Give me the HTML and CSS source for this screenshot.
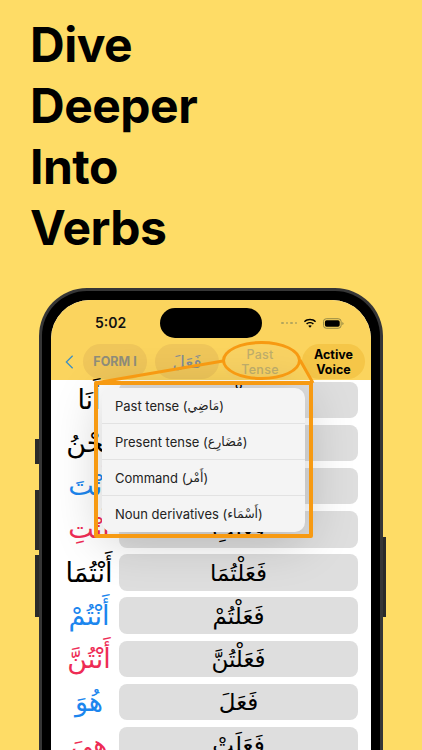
FILE: index.html
```html
<!DOCTYPE html>
<html lang="en">
<head>
<meta charset="utf-8">
<title>Dive Deeper Into Verbs</title>
<link rel="stylesheet" href="styles.css">
</head>
<body>
<main class="poster">
  <h1 class="headline">Dive<br>Deeper<br>Into<br>Verbs</h1>
  <div class="phone">
    <span class="hw hw-mute"></span>
    <span class="hw hw-up"></span>
    <span class="hw hw-down"></span>
    <span class="hw hw-power"></span>
    <div class="screen">
      <div class="island"></div>
      <header class="top">
        <div class="status">
          <span class="time">5:02</span>
          <span class="status-icons">
            <span class="dots"><i></i><i></i><i></i><i></i></span>
            <svg class="wifi" viewBox="0 0 16 12"><path d="M8 2.200c2.300 0 4.300.9 5.800 2.300l1.100-1.200C13.100 1.600 10.700.6 8 .6S2.900 1.600 1.100 3.300l1.100 1.200C3.700 3.100 5.700 2.200 8 2.200zM8 5.800c1.300 0 2.400.5 3.300 1.300l1.100-1.200C11.200 4.800 9.700 4.200 8 4.200s-3.200.6-4.400 1.700l1.100 1.200C5.600 6.300 6.700 5.800 8 5.800zM8 7.900c-.8 0-1.500.3-2 .8l2 2.200 2-2.200c-.5-.5-1.200-.8-2-.8z"/></svg>
            <svg class="battery" viewBox="0 0 22 11"><rect x=".5" y=".5" width="18.500" height="10" rx="3" fill="none" stroke="#8f8442"/><rect x="2" y="2" width="15.500" height="7" rx="1.800"/><path d="M20.300 3.800c.8.300 1.200.9 1.200 1.700s-.4 1.400-1.200 1.700z" fill="#8f8442"/></svg>
          </span>
        </div>
        <nav class="tabs">
          <svg class="back" viewBox="0 0 10 16"><path d="M8.500 1 1.500 8l7 7" fill="none" stroke="#3c8fc4" stroke-width="1.400"/></svg>
          <span class="pill pill-form">FORM I</span>
          <span class="pill pill-verb" lang="ar" dir="rtl">فَعَلَ</span>
          <span class="pill pill-past">Past<br>Tense</span>
          <span class="pill pill-voice">Active<br>Voice</span>
        </nav>
      </header>
      <section class="table">
        <div class="row"><span class="pron black" lang="ar" dir="rtl">أَنَا</span><span class="cell" lang="ar" dir="rtl">فَعَلْتُ</span></div>
        <div class="row"><span class="pron black" lang="ar" dir="rtl">نَحْنُ</span><span class="cell" lang="ar" dir="rtl">فَعَلْنَا</span></div>
        <div class="row"><span class="pron blue" lang="ar" dir="rtl">أَنْتَ</span><span class="cell" lang="ar" dir="rtl">فَعَلْتَ</span></div>
        <div class="row"><span class="pron red" lang="ar" dir="rtl">أَنْتِ</span><span class="cell" lang="ar" dir="rtl">فَعَلْتِ</span></div>
        <div class="row"><span class="pron black" lang="ar" dir="rtl">أَنْتُمَا</span><span class="cell" lang="ar" dir="rtl">فَعَلْتُمَا</span></div>
        <div class="row"><span class="pron blue" lang="ar" dir="rtl">أَنْتُمْ</span><span class="cell" lang="ar" dir="rtl">فَعَلْتُمْ</span></div>
        <div class="row"><span class="pron red" lang="ar" dir="rtl">أَنْتُنَّ</span><span class="cell" lang="ar" dir="rtl">فَعَلْتُنَّ</span></div>
        <div class="row"><span class="pron blue" lang="ar" dir="rtl">هُوَ</span><span class="cell" lang="ar" dir="rtl">فَعَلَ</span></div>
        <div class="row"><span class="pron red" lang="ar" dir="rtl">هِيَ</span><span class="cell" lang="ar" dir="rtl">فَعَلَتْ</span></div>
      </section>
      <ul class="menu">
        <li>Past tense (<span lang="ar">مَاضِي</span>)</li>
        <li>Present tense (<span lang="ar">مُضَارِع</span>)</li>
        <li>Command (<span lang="ar">أَمْر</span>)</li>
        <li>Noun derivatives (<span lang="ar">أَسْمَاء</span>)</li>
      </ul>
      <div class="callout-box"></div>
      <div class="callout-oval"></div>
      <svg class="callout-lines" viewBox="0 0 320 60"><path d="M44 43 172 21M249 20 262 43" fill="none" stroke="#f79a12" stroke-width="3"/></svg>
    </div>
  </div>
</main>
</body>
</html>
```
FILE: styles.css
```css
* { box-sizing: border-box; }
html, body { margin: 0; padding: 0; }
body { width: 422px; height: 750px; overflow: hidden; background: #fedc66; font-family: Inter, "Liberation Sans", sans-serif; }
.poster { width: 422px; height: 750px; overflow: hidden; padding: 14px 0 0 30px; }
.headline { margin: 0; font: 700 48px/61px Inter, "Liberation Sans", sans-serif; letter-spacing: -0.500px; color: #000; }
.phone { position: relative; width: 344px; height: 560px; margin: 30px 0 0 9px; background: #000; border: 3px solid #363636; border-bottom: 0; border-radius: 48px 48px 0 0; padding: 9px 9px 0; }
.hw { position: absolute; width: 4px; background: #2a2a2a; }
.hw-mute { left: -7px; top: 148px; height: 25px; }
.hw-up { left: -7px; top: 199px; height: 60px; }
.hw-down { left: -7px; top: 264px; height: 62px; }
.hw-power { right: -6px; width: 3px; top: 246px; height: 80px; }
.screen { position: relative; width: 320px; height: 560px; overflow: hidden; background: #fff; border-radius: 39px 39px 0 0; }
.island { position: absolute; top: 8px; left: 109px; width: 102px; height: 30px; background: #000; border-radius: 15px; }
.top { height: 80px; background: #fbd45e; padding: 0 5px 0 14px; }
.status { height: 33px; display: flex; align-items: flex-end; justify-content: space-between; padding: 0 22px 0 30px; }
.time { font: 600 14px/20px Inter, "Liberation Sans", sans-serif; color: #111; }
.status-icons { display: flex; align-items: center; gap: 6px; height: 20px; }
.dots { display: flex; gap: 2px; }
.dots i { width: 2.500px; height: 2.500px; border-radius: 50%; background: #b3a65c; }
.wifi { width: 14px; height: 11px; fill: #000; }
.battery { width: 21px; height: 11px; }
.tabs { display: flex; align-items: center; height: 35px; margin-top: 11px; }
.back { width: 9px; height: 16px; margin-right: 9px; flex: none; }
.pill { height: 35px; border-radius: 17.500px; background: #f5c648; display: flex; align-items: center; justify-content: center; text-align: center; font: 700 12.500px/15px Inter, "Liberation Sans", sans-serif; flex: none; }
.pill-form { width: 64px; margin-right: 8px; color: #8f8d7a; background: #efc65a; }
.pill-verb { width: 64px; margin-right: 3px; color: #7f8a96; background: #efc65a; font: 400 17px/20px "DejaVu Sans", sans-serif; }
.pill-past { width: 76px; margin-right: 4px; color: #bfae6b; background: #f8d263; font-weight: 500; letter-spacing: .3px; }
.pill-voice { width: 63px; color: #000; }
.table { display: flex; flex-direction: column; gap: 6.700px; padding: 1.500px 13px 0 0; }
.row { display: flex; align-items: center; height: 36.500px; }
.pron { width: 68px; flex: none; padding-left: 8px; text-align: center; font: 400 27px/36px "DejaVu Sans", sans-serif; white-space: nowrap; }
.black { color: #000; }
.blue { color: #1c86ee; }
.red { color: #ee2c55; }
.cell { flex: 1; height: 36.500px; border-radius: 8px; background: #dedede; display: flex; align-items: center; justify-content: center; font: 400 23px/36px "DejaVu Sans", sans-serif; color: #000; }
.menu { position: absolute; top: 88px; left: 51px; width: 203px; margin: 0; padding: 0; list-style: none; background: #f4f4f4; border-radius: 10px; box-shadow: 0 8px 50px rgba(0,0,0,.2); }
.menu li { height: 36px; padding-left: 13px; display: flex; align-items: center; white-space: pre; font: 400 13px/16px Inter, "Liberation Sans", sans-serif; color: #222; border-bottom: 1.500px solid #e2e2e2; }
.menu li:last-child { border-bottom: 0; }
.menu span { font-family: "DejaVu Sans", sans-serif; font-size: 12.500px; }
.callout-box { position: absolute; top: 81px; left: 43px; width: 219px; height: 157px; border: 4.500px solid #f79a12; border-radius: 2px; }
.callout-oval { position: absolute; top: 41px; left: 171px; width: 79px; height: 39px; border: 3px solid #f79a12; border-radius: 50%; }
.callout-lines { position: absolute; top: 40px; left: 0; width: 320px; height: 60px; }
```
